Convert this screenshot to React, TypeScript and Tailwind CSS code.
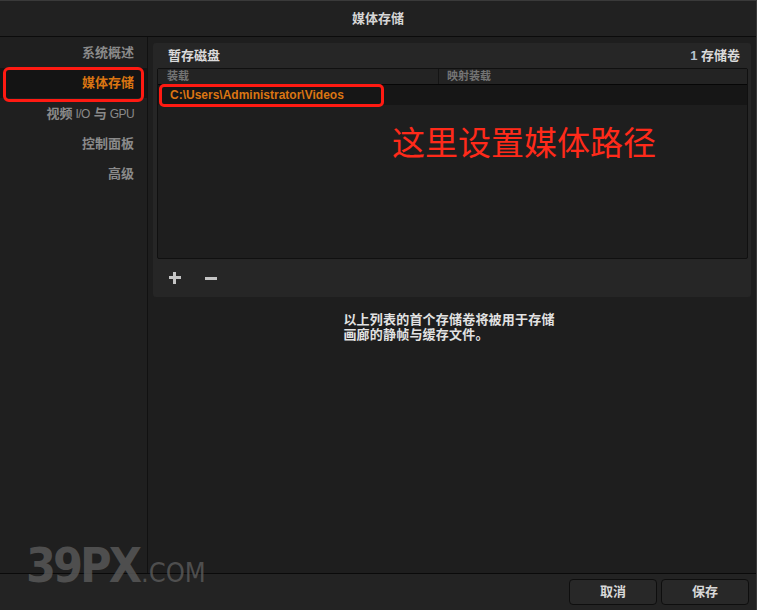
import React from "react";

const cjk = { fontFamily: '"Liberation Sans", "Noto Sans CJK SC", sans-serif' };

export default function App() {
  const items = ["系统概述", "媒体存储", "视频", "控制面板", "高级"];
  return (
    <div
      className="relative w-[757px] h-[610px] flex flex-col bg-[#1e1e1e] border-t border-r border-[#3a3a3a] overflow-hidden"
      style={cjk}
    >
      {/* title bar */}
      <div className="h-[36px] shrink-0 flex items-center justify-center bg-[#212121] border-b border-[#0b0b0b] text-[13px] font-bold text-[#d6d6d6]">
        媒体存储
      </div>

      {/* body */}
      <div className="flex-1 flex min-h-0">
        {/* sidebar */}
        <div className="w-[148px] shrink-0 bg-[#1f1f1f] border-r border-[#111111] flex flex-col pt-[1px]">
          {items.map((t, i) => (
            <div
              key={t}
              className={
                "relative h-[30px] flex items-center justify-end pr-[13px] text-[13px] font-bold " +
                (i === 1 ? "bg-[#141414] text-[#db7512]" : "text-[#8a8a8a]") +
                (i === 2 ? " mt-[1px]" : "")
              }
            >
              {i === 2 ? (
                <span className="flex items-center">
                  <span>视频</span>
                  <span className="font-normal text-[12px] tracking-[-0.6px] ml-[3px]">I/O</span>
                  <span className="ml-[4px]">与</span>
                  <span className="font-normal text-[12px] tracking-[-0.6px] ml-[3px]">GPU</span>
                </span>
              ) : (
                t
              )}
              {i === 1 && (
                <div className="absolute left-[3px] right-[3px] top-[-1px] bottom-[-4px] border-[3px] border-[#ff1a12] rounded-[6px]" />
              )}
            </div>
          ))}
        </div>

        {/* main */}
        <div className="flex-1 flex flex-col pl-[5px] pr-[5px] pt-[6px]">
          <div className="h-[254px] bg-[#262626] rounded-[3px] flex flex-col pl-[4px] pr-[3px]">
            <div className="h-[25px] flex items-center justify-between pl-[11px] pr-[8px] text-[13px] font-bold text-[#dadada]">
              <span>暂存磁盘</span>
              <span>
                <span className="text-[#b9c4d0]">1</span> 存储卷
              </span>
            </div>
            <div className="relative h-[191px] bg-[#1e1e1e] border border-[#101010] rounded-[2px] flex flex-col">
              <div className="h-[16px] flex bg-[#232323] border-b border-[#060606] text-[11px] font-bold text-[#747474]">
                <div className="w-[281px] pl-[9px] flex items-center border-r border-[#141414]">装载</div>
                <div className="pl-[8px] flex items-center">映射装载</div>
              </div>
              <div className="h-[20px] bg-[#161616] flex items-center pl-[12px] text-[12px] font-bold text-[#db7512]">
                C:\Users\Administrator\Videos
              </div>
              <div className="absolute left-[1px] top-[15px] w-[225px] h-[23px] border-[3px] border-[#ff1a12] rounded-[5px]" />
              <div
                className="absolute left-[234px] top-[56px] text-[33px] leading-none text-[#ff2a1a]"
                style={{ fontFamily: '"Noto Sans CJK SC", sans-serif' }}
              >
                这里设置媒体路径
              </div>
            </div>
            <div className="flex-1 flex items-center gap-[24px] pl-[12px]">
              <div className="relative w-[12px] h-[12px]">
                <div className="absolute left-0 top-[4px] w-[12px] h-[3px] bg-[#c4c4c4]" />
                <div className="absolute left-[4px] top-0 w-[3px] h-[12px] bg-[#c4c4c4]" />
              </div>
              <div className="w-[12px] h-[3px] bg-[#c4c4c4]" />
            </div>
          </div>
          <div className="mt-[15px] self-center ml-[-6px] text-[13px] leading-[15px] font-bold text-[#e2e2e2] tracking-[0.2px]">
            <div>以上列表的首个存储卷将被用于存储</div>
            <div>画廊的静帧与缓存文件。</div>
          </div>
        </div>
      </div>

      {/* footer */}
      <div className="h-[37px] shrink-0 bg-[#232323] border-t border-[#0a0a0a] flex items-center justify-end gap-[4px] pr-[7px]">
        <button className="w-[88px] h-[26px] rounded-[4px] bg-[#282828] border border-[#0e0e0e] text-[13px] font-bold text-[#d8d8d8]">
          取消
        </button>
        <button className="w-[88px] h-[26px] rounded-[4px] bg-[#282828] border border-[#0e0e0e] text-[13px] font-bold text-[#d8d8d8]">
          保存
        </button>
      </div>

      {/* watermark */}
      <div
        className="absolute left-[26px] top-[540px] flex items-baseline text-[#5a5a5a] opacity-80 font-bold leading-none"
        style={{ fontFamily: '"DejaVu Sans Condensed", "DejaVu Sans", sans-serif', fontStretch: "condensed" }}
      >
        <span className="text-[48px] tracking-[-3px]">39PX</span>
        <span className="text-[27px] font-normal ml-[2px]">.COM</span>
      </div>
    </div>
  );
}
